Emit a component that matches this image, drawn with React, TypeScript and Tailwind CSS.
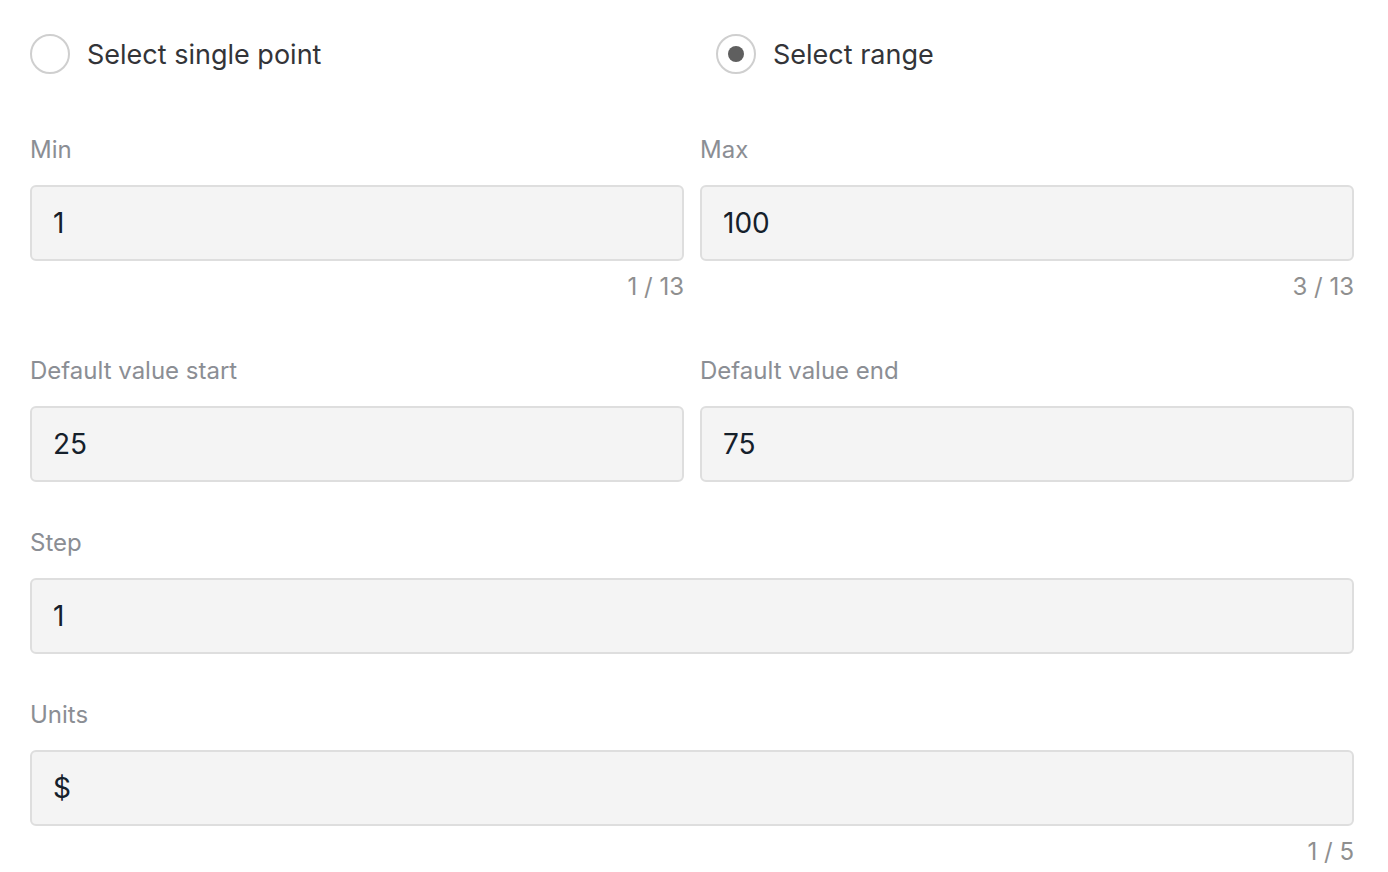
import React from 'react';

const Radio: React.FC<{ checked?: boolean; label: string }> = ({ checked, label }) => (
  <label className="flex items-center gap-[17px] h-10">
    <span className="w-10 h-10 rounded-full border-2 border-[#cfcfcf] flex items-center justify-center shrink-0">
      {checked && <span className="w-4 h-4 rounded-full bg-[#5f5f5f]" />}
    </span>
    <span className="text-[27px] text-[#333438] leading-none">{label}</span>
  </label>
);

const Field: React.FC<{ label: string; value: string; counter?: string }> = ({ label, value, counter }) => (
  <div className="flex flex-col">
    <div className="text-[24px] leading-[28px] text-[#8b8e94]">{label}</div>
    <div className="mt-[21px] h-[76px] rounded-[6px] border-2 border-[#dedede] bg-[#f4f4f4] flex items-center pl-[21px]">
      <span className="text-[28px] text-[#15202b]">{value}</span>
    </div>
    {counter && (
      <div className="mt-3 mb-[9px] text-[24px] leading-[28px] text-[#8f8f8f] text-right">{counter}</div>
    )}
  </div>
);

export default function App() {
  return (
    <div
      className="w-[1388px] h-[872px] bg-white overflow-hidden pl-[30px] pr-[34px] pt-[34px]"
      style={{ fontFamily: 'Inter, "Noto Sans", sans-serif' }}
    >
      <div className="grid grid-cols-2 gap-4">
        <Radio label="Select single point" />
        <div className="pl-4">
          <Radio checked label="Select range" />
        </div>
      </div>

      <div className="mt-[62px] flex flex-col gap-[47px]">
        <div className="grid grid-cols-2 gap-4">
          <Field label="Min" value="1" counter="1 / 13" />
          <Field label="Max" value="100" counter="3 / 13" />
        </div>
        <div className="grid grid-cols-2 gap-4">
          <Field label="Default value start" value="25" />
          <Field label="Default value end" value="75" />
        </div>
        <Field label="Step" value="1" />
        <Field label="Units" value="$" counter="1 / 5" />
      </div>
    </div>
  );
}
